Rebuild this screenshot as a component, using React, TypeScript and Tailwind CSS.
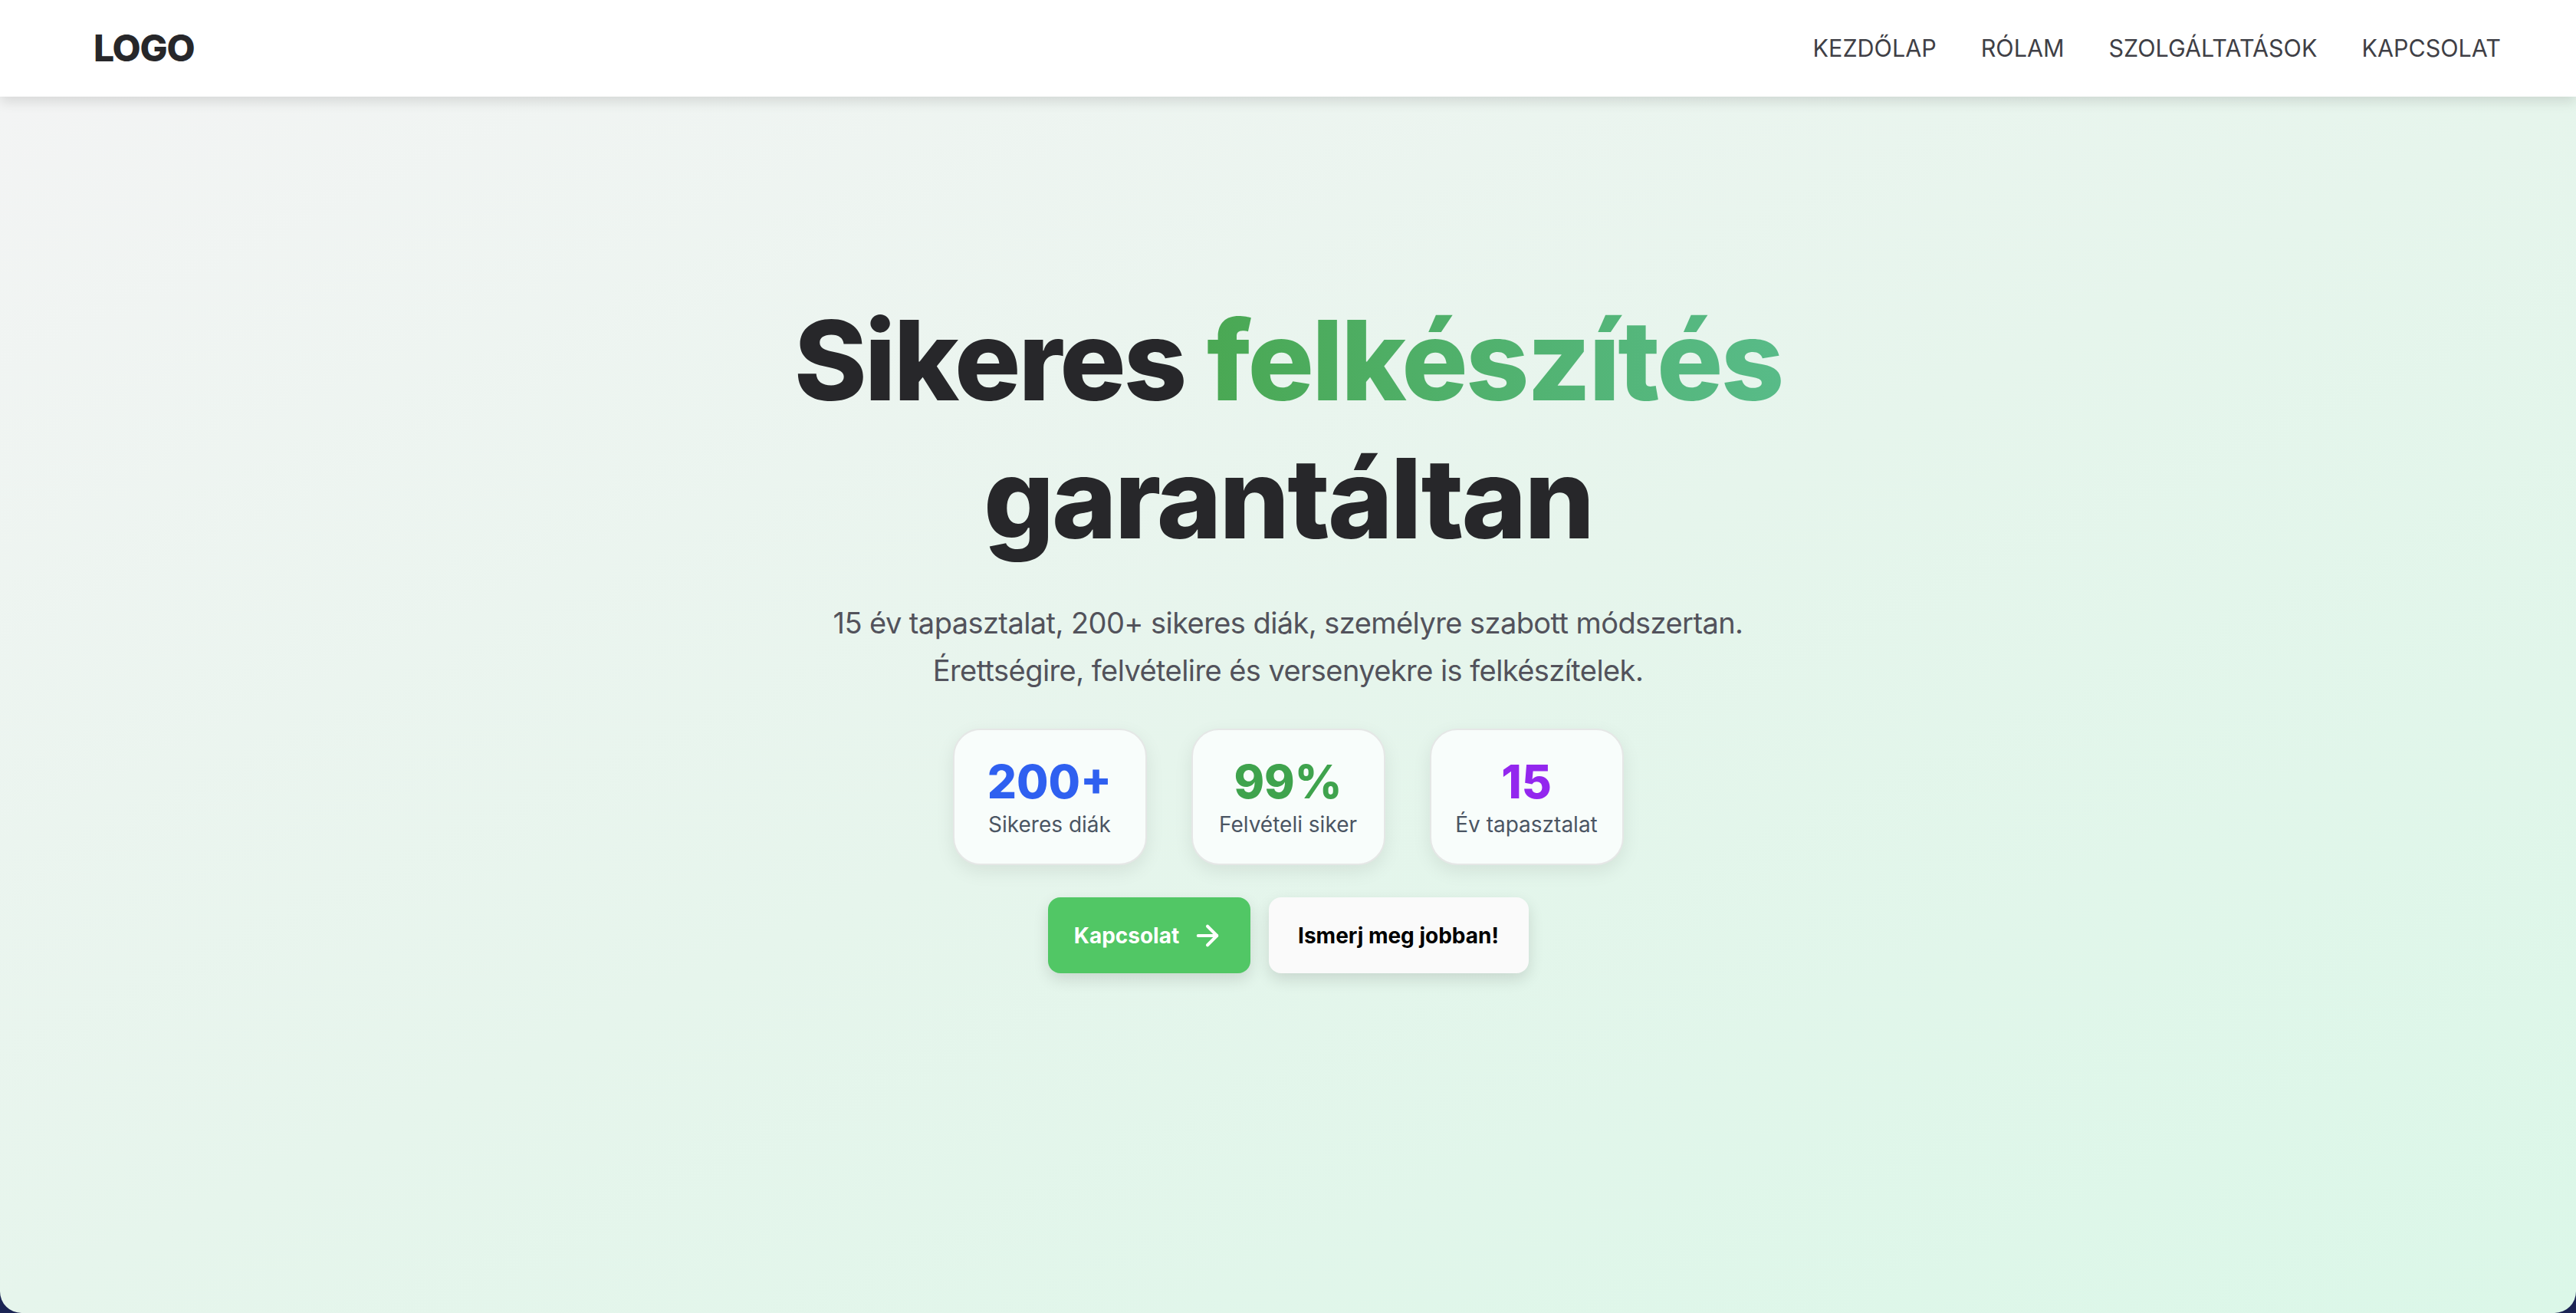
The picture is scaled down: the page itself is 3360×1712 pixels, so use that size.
import React from "react";
import { ArrowRight } from "lucide-react";

const stats = [
  { value: "200+", label: "Sikeres diák", color: "text-[#2f60f0]" },
  { value: "99%", label: "Felvételi siker", color: "text-[#3fa34d]" },
  { value: "15", label: "Év tapasztalat", color: "text-[#9327ee]" },
];

export default function App() {
  return (
    <div
      className="flex h-[1712px] w-full flex-col overflow-hidden bg-[#1b2454]"
      style={{ fontFamily: "Inter, 'Noto Sans', sans-serif" }}
    >
      <header className="relative z-10 flex h-[126px] shrink-0 items-center justify-between bg-white pl-[122px] pr-[98px] shadow-[0_6px_16px_rgba(0,0,0,0.12)]">
        <div className="text-[48px] font-extrabold tracking-tight text-[#27272a]">LOGO</div>
        <nav className="flex items-center gap-[58px] text-[30.5px] text-[#3f3f46]">
          <a>KEZDŐLAP</a>
          <a>RÓLAM</a>
          <a>SZOLGÁLTATÁSOK</a>
          <a>KAPCSOLAT</a>
        </nav>
      </header>
      <main className="flex flex-1 flex-col items-center rounded-b-[28px] bg-linear-to-br from-[#f3f4f4] via-[#e6f5ec] to-[#dbf7e8] pt-[254px]">
        <h1 className="text-center text-[144px] font-extrabold leading-[180px] tracking-[-0.02em] text-[#27272a]">
          Sikeres{" "}
          <span className="bg-linear-to-r from-[#4aa853] to-[#58bb88] bg-clip-text text-transparent">
            felkészítés
          </span>
          <br />
          garantáltan
        </h1>
        <p className="mt-[41px] text-center text-[38px] leading-[62px] tracking-[-0.015em] text-[#52525b]">
          15 év tapasztalat, 200+ sikeres diák, személyre szabott módszertan.
          <br />
          Érettségire, felvételire és versenyekre is felkészítelek.
        </p>
        <div className="mt-[45px] flex gap-[58px]">
          {stats.map((s) => (
            <div
              key={s.label}
              className="flex w-[253px] flex-col items-center rounded-[36px] border-2 border-[#e5e7e6] bg-[#f8fdfb] py-[31px] shadow-[0_8px_24px_rgba(0,0,0,0.08)]"
            >
              <div className={`text-[60px] font-extrabold leading-[72px] ${s.color}`}>{s.value}</div>
              <div className="text-[28px] leading-[40px] text-[#4b5563]">{s.label}</div>
            </div>
          ))}
        </div>
        <div className="mt-[42px] flex gap-[24px]">
          <button className="flex h-[99px] w-[264px] items-center justify-center gap-[16px] rounded-[16px] bg-[#51c765] text-[28px] font-bold text-white shadow-[0_8px_20px_rgba(0,0,0,0.12)]">
            Kapcsolat
            <ArrowRight size={42} strokeWidth={2.3} />
          </button>
          <button className="flex h-[99px] w-[339px] items-center justify-center rounded-[16px] bg-[#fafafa] text-[28px] font-bold text-black shadow-[0_8px_20px_rgba(0,0,0,0.12)]">
            Ismerj meg jobban!
          </button>
        </div>
      </main>
    </div>
  );
}
